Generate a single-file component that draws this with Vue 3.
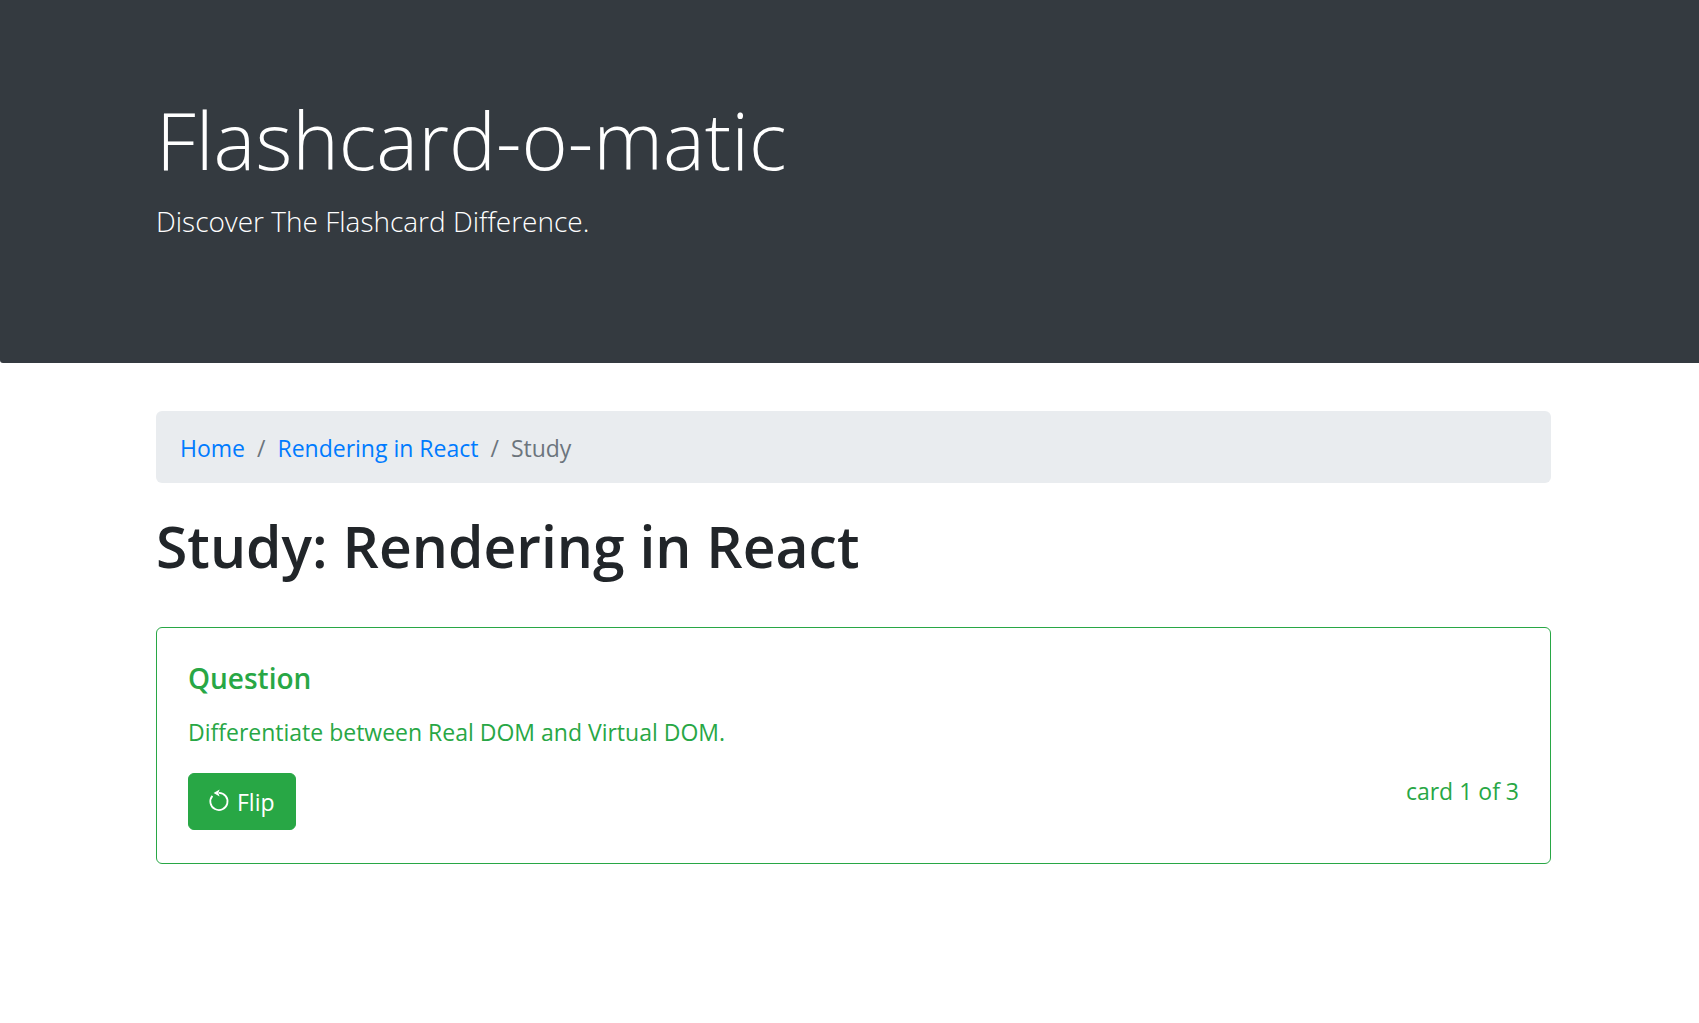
<script setup>
import { ref, computed } from 'vue'

const deck = {
  name: 'Rendering in React',
  cards: [
    { front: 'Differentiate between Real DOM and Virtual DOM.' },
    { front: 'What is JSX?' },
    { front: 'What are props?' },
  ],
}
const index = ref(0)
const card = computed(() => deck.cards[index.value])
</script>

<template>
  <div class="page">
    <header class="jumbotron">
      <div class="container">
        <h1 class="display">Flashcard-o-matic</h1>
        <p class="lead">Discover The Flashcard Difference.</p>
      </div>
    </header>
    <main class="container">
      <nav aria-label="breadcrumb">
        <ol class="breadcrumb">
          <li><a href="#home">Home</a></li>
          <li><a href="#deck">{{ deck.name }}</a></li>
          <li aria-current="page">Study</li>
        </ol>
      </nav>
      <h2 class="title">Study: {{ deck.name }}</h2>
      <section class="card">
        <h3 class="card-title">Question</h3>
        <p class="card-text">{{ card.front }}</p>
        <div class="card-footer">
          <button type="button" class="flip">
            <svg class="icon" viewBox="0 0 20 24" aria-hidden="true">
              <path d="M3.4 5.8a8.6 8.6 0 1 0 6.6-3" fill="none" stroke="currentColor" stroke-width="1.8" />
              <path d="M4.6 3 10.6 -0.6 9.4 3l1.2 3.6z" fill="currentColor" />
            </svg>
            <span>Flip</span>
          </button>
          <span class="count">card {{ index + 1 }} of {{ deck.cards.length }}</span>
        </div>
      </section>
    </main>
  </div>
</template>

<style>
body {
  margin: 0;
  background: #fff;
  overflow-x: hidden;
}
</style>

<style scoped>
.page {
  width: calc(100% + 7px);
  color: #212529;
  font-family: "Open Sans", "Noto Sans", sans-serif;
  font-size: 23px;
  line-height: 36px;
}
.container {
  box-sizing: border-box;
  max-width: 1440px;
  margin: 0 auto;
  padding: 0 22px 0 23px;
}
.jumbotron {
  margin-bottom: 48px;
  padding: 96px 0;
  border-radius: 0 0 3px 3px;
  background: #343a40;
  color: #fff;
}
.display {
  margin: 0 0 19px;
  font-size: 79px;
  font-weight: 300;
  line-height: 88px;
}
.lead {
  margin: 0 0 28px;
  font-size: 28px;
  font-weight: 300;
  line-height: 36px;
}
.breadcrumb {
  display: flex;
  margin: 0 0 24px;
  padding: 19px 24px 17px;
  border-radius: 6px;
  background: #e9ecef;
  color: #6c757d;
  list-style: none;
}
.breadcrumb li + li::before {
  content: "/";
  padding: 0 12px;
}
.breadcrumb a {
  color: #007bff;
  text-decoration: none;
}
.title {
  margin: 0 0 42px;
  font-size: 57px;
  font-weight: 600;
  line-height: 78px;
}
.card {
  padding: 32px 31px 33px;
  border: 1px solid #28a745;
  border-radius: 6px;
  color: #28a745;
}
.card-title {
  margin: 0 0 18px;
  font-size: 28px;
  font-weight: 600;
  line-height: 36px;
}
.card-text {
  margin: 0 0 23px;
}
.card-footer {
  display: flex;
  justify-content: space-between;
  align-items: flex-start;
}
.flip {
  display: flex;
  align-items: center;
  gap: 8px;
  padding: 10px 20px 9px;
  border: 1px solid #28a745;
  border-radius: 6px;
  background: #28a745;
  color: #fff;
  font: inherit;
}
.icon {
  width: 20px;
  height: 24px;
  overflow: visible;
}
</style>
